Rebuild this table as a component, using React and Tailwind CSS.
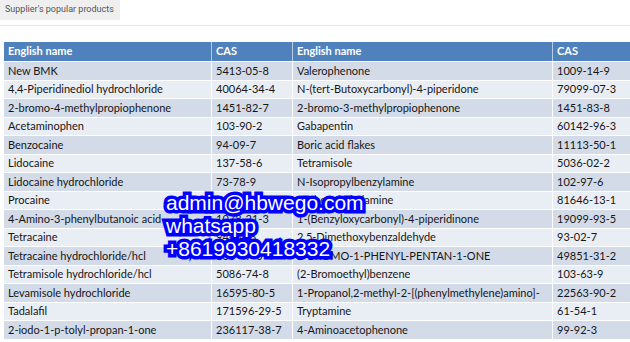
import React from "react";

const rows = [
  ["New BMK", "5413-05-8", "Valerophenone", "1009-14-9"],
  ["4,4-Piperidinediol hydrochloride", "40064-34-4", "N-(tert-Butoxycarbonyl)-4-piperidone", "79099-07-3"],
  ["2-bromo-4-methylpropiophenone", "1451-82-7", "2-bromo-3-methylpropiophenone", "1451-83-8"],
  ["Acetaminophen", "103-90-2", "Gabapentin", "60142-96-3"],
  ["Benzocaine", "94-09-7", "Boric acid flakes", "11113-50-1"],
  ["Lidocaine", "137-58-6", "Tetramisole", "5036-02-2"],
  ["Lidocaine hydrochloride", "73-78-9", "N-Isopropylbenzylamine", "102-97-6"],
  ["Procaine", "59-46-1", "2-Phenylethylamine", "81646-13-1"],
  ["4-Amino-3-phenylbutanoic acid", "1078-21-3", "1-(Benzyloxycarbonyl)-4-piperidinone", "19099-93-5"],
  ["Tetracaine", "94-24-6", "2,5-Dimethoxybenzaldehyde", "93-02-7"],
  ["Tetracaine hydrochloride/hcl", "136-47-0", "2-BROMO-1-PHENYL-PENTAN-1-ONE", "49851-31-2"],
  ["Tetramisole hydrochloride/hcl", "5086-74-8", "(2-Bromoethyl)benzene", "103-63-9"],
  ["Levamisole hydrochloride", "16595-80-5", "1-Propanol,2-methyl-2-[(phenylmethylene)amino]-", "22563-90-2"],
  ["Tadalafil", "171596-29-5", "Tryptamine", "61-54-1"],
  ["2-iodo-1-p-tolyl-propan-1-one", "236117-38-7", "4-Aminoacetophenone", "99-92-3"],
];

export default function App() {
  return (
    <div className="w-[630px] h-[342px] bg-white overflow-hidden relative font-['Lato',sans-serif]">
      <div className="h-[26px] border-b border-[#e6e6e6]">
        <div className="flex items-center w-[120px] h-[20px] pl-[5px] bg-[#efefef] text-[9px] text-[#555] font-['Roboto',sans-serif]">
          Supplier's popular products
        </div>
      </div>
      <div className="pt-[16px] pl-[4px]">
        <div className="grid grid-cols-[208px_81px_260px_73px] h-[19px] bg-[#4f81bd] text-white font-bold text-[11px]">
          <div className="pl-[4px] border-r border-white/60 h-full flex items-center">English name</div>
          <div className="pl-[4px] border-r border-white/60 h-full flex items-center">CAS</div>
          <div className="pl-[4px] border-r border-white/60 h-full flex items-center">English name</div>
          <div className="pl-[4px] h-full flex items-center">CAS</div>
        </div>
        {rows.map((r, i) => (
          <div
            key={i}
            className={`grid grid-cols-[208px_81px_260px_73px] h-[18.5px] text-[11px] text-[#161616] border-t border-white ${
              i % 2 === 0 ? "bg-[#d3dbe9]" : "bg-[#e9edf4]"
            }`}
          >
            <div className="pl-[4px] border-r border-white flex items-center whitespace-nowrap overflow-hidden">{r[0]}</div>
            <div className="pl-[4px] border-r border-white flex items-center whitespace-nowrap overflow-hidden">{r[1]}</div>
            <div className="pl-[4px] border-r border-white flex items-center whitespace-nowrap overflow-hidden">{r[2]}</div>
            <div className="pl-[4px] flex items-center whitespace-nowrap overflow-hidden">{r[3]}</div>
          </div>
        ))}
      </div>
      <div className="absolute left-[166px] top-[191px] flex flex-col text-white text-[21px] leading-[23px] font-['Liberation_Sans',sans-serif] [-webkit-text-stroke:7px_#0000ff] [paint-order:stroke_fill]">
        <span>admin@hbwego.com</span>
        <span>whatsapp</span>
        <span>+8619930418332</span>
      </div>
    </div>
  );
}
